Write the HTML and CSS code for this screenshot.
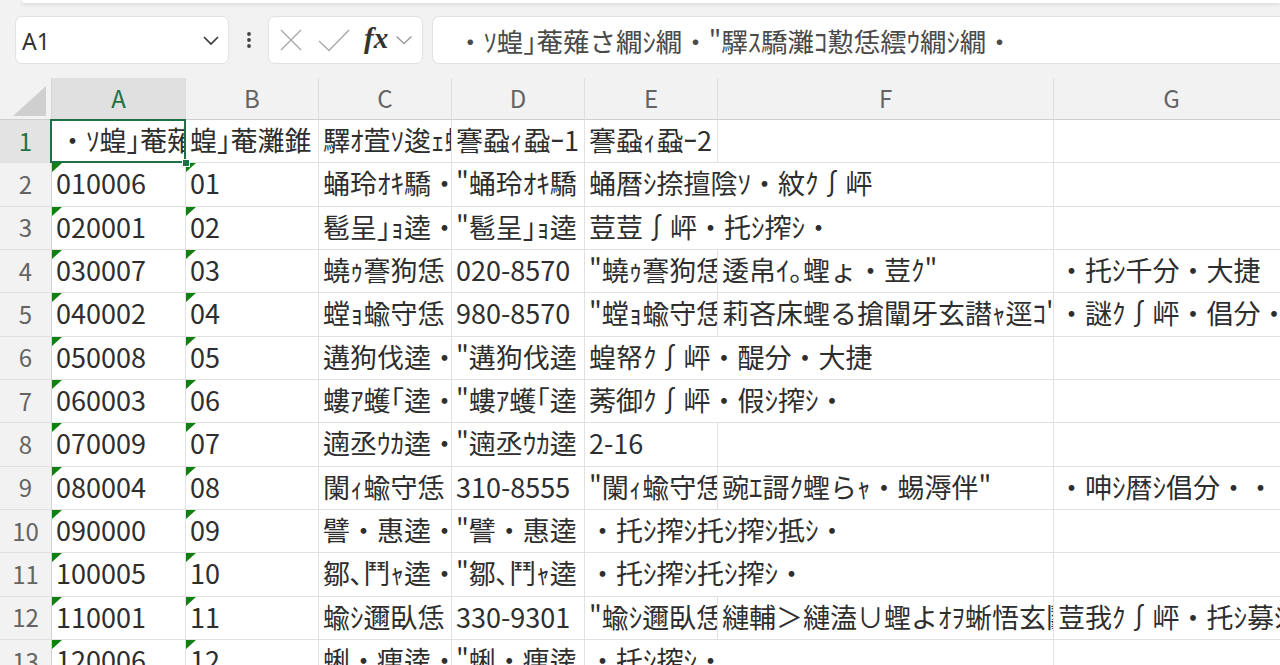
FILE: index.html
```html
<!DOCTYPE html>
<html lang="ja">
<head>
<meta charset="utf-8">
<title>Sheet</title>
<link rel="stylesheet" href="styles.css">
</head>
<body>
<div class="ribbon-edge"></div>
<div class="toolbar">
  <div class="namebox">
    <span class="namebox-text">A1</span>
    <svg class="chev" width="18" height="11" viewBox="0 0 18 11"><path d="M2 2 L9 9 L16 2" fill="none" stroke="#3a3a3a" stroke-width="1.7"/></svg>
  </div>
  <div class="more">
    <svg width="6" height="18" viewBox="0 0 6 18"><circle cx="3" cy="3" r="1.9" fill="#444"/><circle cx="3" cy="9" r="1.9" fill="#444"/><circle cx="3" cy="15" r="1.9" fill="#444"/></svg>
  </div>
  <div class="fxbox">
    <svg class="ico-x" width="24" height="22" viewBox="0 0 24 22"><path d="M2 1 L22 21 M22 1 L2 21" fill="none" stroke="#a9a9a9" stroke-width="1.4"/></svg>
    <svg class="ico-ok" width="32" height="23" viewBox="0 0 32 23"><path d="M1 12 L11 21.5 L31 1" fill="none" stroke="#a9a9a9" stroke-width="1.4"/></svg>
    <span class="fx">fx</span>
    <svg class="ico-dd" width="18" height="10" viewBox="0 0 18 10"><path d="M1.5 1.5 L9 8.5 L16.5 1.5" fill="none" stroke="#9a9a9a" stroke-width="1.3"/></svg>
  </div>
  <div class="formula">・ｿ蝗｣菴薙さ繝ｼ繝・"驛ｽ驕灘ｺ懃恁繧ｳ繝ｼ繝・</div>
</div>

<div class="sheet">
  <div class="row head">
    <div class="corner"><svg width="34" height="31" viewBox="0 0 34 31"><path d="M33 0 L33 30 L0 30 Z" fill="#cfcfcf"/></svg></div>
    <div class="ch csel">A</div><div class="ch">B</div><div class="ch">C</div><div class="ch">D</div><div class="ch">E</div><div class="ch">F</div><div class="ch">G</div>
  </div>

  <div class="row">
    <div class="rh rsel">1</div>
    <div class="c sel"><span class="clip">・ｿ蝗｣菴薙さ繝ｼ繝・</span></div>
    <div class="c">蝗｣菴灘錐</div>
    <div class="c">驛ｵ萓ｿ逡ｪ蜿ｷ</div>
    <div class="c">謇蝨ｨ蝨ｰ1</div>
    <div class="c">謇蝨ｨ蝨ｰ2</div>
    <div class="c"></div>
    <div class="c"></div>
  </div>

  <div class="row">
    <div class="rh">2</div>
    <div class="c t">010006</div><div class="c t">01</div>
    <div class="c">蛹玲ｵｷ驕・</div>
    <div class="c">"蛹玲ｵｷ驕</div>
    <div class="c span2">蛹暦ｼ捺擅陰ｿ・紋ｸ∫岼</div>
    <div class="c"></div>
  </div>

  <div class="row">
    <div class="rh">3</div>
    <div class="c t">020001</div><div class="c t">02</div>
    <div class="c">髱呈｣ｮ逵・</div>
    <div class="c">"髱呈｣ｮ逵</div>
    <div class="c span2">荳荳∫岼・托ｼ搾ｼ・</div>
    <div class="c"></div>
  </div>

  <div class="row">
    <div class="rh">4</div>
    <div class="c t">030007</div><div class="c t">03</div>
    <div class="c">蟯ｩ謇狗恁</div>
    <div class="c">020-8570</div>
    <div class="c">"蟯ｩ謇狗恁</div>
    <div class="c">逶帛ｲ｡蟶ょ・荳ｸ"</div>
    <div class="c">・托ｼ千分・大捷</div>
  </div>

  <div class="row">
    <div class="rh">5</div>
    <div class="c t">040002</div><div class="c t">04</div>
    <div class="c">螳ｮ蝓守恁</div>
    <div class="c">980-8570</div>
    <div class="c">"螳ｮ蝓守恁</div>
    <div class="c">莉吝床蟶る搶闡牙玄譛ｬ逕ｺ"</div>
    <div class="c">・謎ｸ∫岼・倡分・</div>
  </div>

  <div class="row">
    <div class="rh">6</div>
    <div class="c t">050008</div><div class="c t">05</div>
    <div class="c">遘狗伐逵・</div>
    <div class="c">"遘狗伐逵</div>
    <div class="c span2">蝗帑ｸ∫岼・醍分・大捷</div>
    <div class="c"></div>
  </div>

  <div class="row">
    <div class="rh">7</div>
    <div class="c t">060003</div><div class="c t">06</div>
    <div class="c">螻ｱ蠖｢逵・</div>
    <div class="c">"螻ｱ蠖｢逵</div>
    <div class="c span2">莠御ｸ∫岼・假ｼ搾ｼ・</div>
    <div class="c"></div>
  </div>

  <div class="row">
    <div class="rh">8</div>
    <div class="c t">070009</div><div class="c t">07</div>
    <div class="c">遖丞ｳｶ逵・</div>
    <div class="c">"遖丞ｳｶ逵</div>
    <div class="c">2-16</div>
    <div class="c"></div>
    <div class="c"></div>
  </div>

  <div class="row">
    <div class="rh">9</div>
    <div class="c t">080004</div><div class="c t">08</div>
    <div class="c">闌ｨ蝓守恁</div>
    <div class="c">310-8555</div>
    <div class="c">"闌ｨ蝓守恁</div>
    <div class="c">豌ｴ謌ｸ蟶らｬ・蜴溽伴"</div>
    <div class="c">・呻ｼ暦ｼ倡分・・</div>
  </div>

  <div class="row">
    <div class="rh">10</div>
    <div class="c t">090000</div><div class="c t">09</div>
    <div class="c">譬・惠逵・</div>
    <div class="c">"譬・惠逵</div>
    <div class="c span2">・托ｼ搾ｼ托ｼ搾ｼ抵ｼ・</div>
    <div class="c"></div>
  </div>

  <div class="row">
    <div class="rh">11</div>
    <div class="c t">100005</div><div class="c t">10</div>
    <div class="c">鄒､鬥ｬ逵・</div>
    <div class="c">"鄒､鬥ｬ逵</div>
    <div class="c span2">・托ｼ搾ｼ托ｼ搾ｼ・</div>
    <div class="c"></div>
  </div>

  <div class="row">
    <div class="rh">12</div>
    <div class="c t">110001</div><div class="c t">11</div>
    <div class="c">蝓ｼ邇臥恁</div>
    <div class="c">330-9301</div>
    <div class="c">"蝓ｼ邇臥恁</div>
    <div class="c">縺輔＞縺溘∪蟶よｵｦ蜥悟玄鬮倡</div>
    <div class="c">荳我ｸ∫岼・托ｼ募ｼ・</div>
  </div>

  <div class="row">
    <div class="rh">13</div>
    <div class="c t">120006</div><div class="c t">12</div>
    <div class="c">蜊・痩逵・</div>
    <div class="c">"蜊・痩逵</div>
    <div class="c span2">・托ｼ搾ｼ・</div>
    <div class="c"></div>
  </div>
</div>
</body>
</html>
```

FILE: styles.css
```css
html, body {
  margin: 0;
  padding: 0;
}
body {
  width: 1280px;
  height: 665px;
  overflow: hidden;
  background: #f2f2f2;
  font-family: "Noto Sans CJK JP", "Noto Sans", sans-serif;
}

.ribbon-edge {
  height: 3px;
  margin-left: 22px;
  background: #ffffff;
  border-bottom-left-radius: 6px;
  box-shadow: 0 1px 4px rgba(0, 0, 0, 0.14);
}

.toolbar {
  display: flex;
  align-items: center;
  height: 48px;
  margin-top: 13px;
  padding-left: 15px;
}

.namebox {
  box-sizing: border-box;
  width: 214px;
  height: 48px;
  background: #fff;
  border: 1px solid #e2e2e2;
  border-radius: 7px;
  display: flex;
  align-items: center;
  justify-content: space-between;
  padding: 0 8px 0 6px;
}
.namebox-text {
  font-family: "Noto Sans", sans-serif;
  font-size: 23px;
  color: #333;
  padding-top: 2px;
}

.more {
  width: 39px;
  display: flex;
  justify-content: center;
  align-items: center;
}

.fxbox {
  box-sizing: border-box;
  width: 155px;
  height: 48px;
  background: #fff;
  border: 1px solid #e2e2e2;
  border-radius: 7px;
  display: flex;
  align-items: center;
  padding-left: 10px;
}
.ico-x { margin-right: 15px; }
.ico-ok { margin-right: 14px; }
.fx {
  font-family: "Liberation Serif", serif;
  font-style: italic;
  font-weight: bold;
  font-size: 29px;
  color: #333;
  margin-right: 7px;
  line-height: 1;
  padding-bottom: 3px;
}

.formula {
  flex: 1;
  box-sizing: border-box;
  height: 48px;
  margin-left: 9px;
  background: #fff;
  border: 1px solid #e2e2e2;
  border-right: none;
  border-radius: 7px 0 0 7px;
  display: flex;
  align-items: center;
  padding-left: 24px;
  font-size: 26.5px;
  color: #4a4a4a;
  white-space: nowrap;
  overflow: hidden;
}

.sheet {
  margin-top: 14px;
}

.row {
  display: grid;
  grid-template-columns: 52px 134px 133px 133px 133px 133px 336px 236px;
  height: 43.33px;
}
.row.head {
  height: 42px;
}

.corner {
  box-sizing: border-box;
  background: #f2f2f2;
  border-right: 1px solid #d6d6d6;
  border-bottom: 1px solid #cfcfcf;
  display: flex;
  align-items: flex-end;
  justify-content: flex-end;
  padding: 0 4px 2px 0;
}

.ch {
  box-sizing: border-box;
  background: #f2f2f2;
  border-right: 1px solid #dedede;
  border-bottom: 1px solid #cfcfcf;
  display: flex;
  align-items: center;
  justify-content: center;
  font-size: 24px;
  color: #646464;
  padding-bottom: 3px;
}
.ch.csel {
  background: #e0e0e0;
  color: #1e7145;
}

.rh {
  box-sizing: border-box;
  background: #f2f2f2;
  border-right: 1px solid #d3d3d3;
  border-bottom: 1px solid #e0e0e0;
  display: flex;
  align-items: center;
  justify-content: center;
  font-size: 24px;
  color: #646464;
  padding-bottom: 2px;
}
.rh.rsel {
  background: #e3e3e3;
  color: #1e7145;
}

.c {
  box-sizing: border-box;
  position: relative;
  background: #fff;
  border-right: 1px solid #e1e1e1;
  border-bottom: 1px solid #e1e1e1;
  overflow: hidden;
  white-space: nowrap;
  display: flex;
  align-items: center;
  padding-left: 4px;
  padding-bottom: 3px;
  font-size: 27px;
  color: #2e2e2e;
}
.c.span2 {
  grid-column: span 2;
}

/* green "number stored as text" indicator */
.c.t::before {
  content: "";
  position: absolute;
  left: 0;
  top: 0;
  border-top: 9px solid #108010;
  border-right: 10px solid transparent;
}

/* active cell */
.c.sel {
  overflow: visible;
  z-index: 2;
}
.c.sel .clip {
  display: block;
  overflow: hidden;
  width: 100%;
  padding-left: 3px;
}
.c.sel::after {
  content: "";
  position: absolute;
  left: -2px;
  top: -1px;
  right: -1px;
  bottom: -1px;
  border: 2px solid #1e7145;
}
.c.sel::before {
  content: "";
  position: absolute;
  right: -5px;
  bottom: -5px;
  width: 6px;
  height: 6px;
  background: #1e7145;
  border: 1px solid #fff;
  z-index: 3;
}
```
